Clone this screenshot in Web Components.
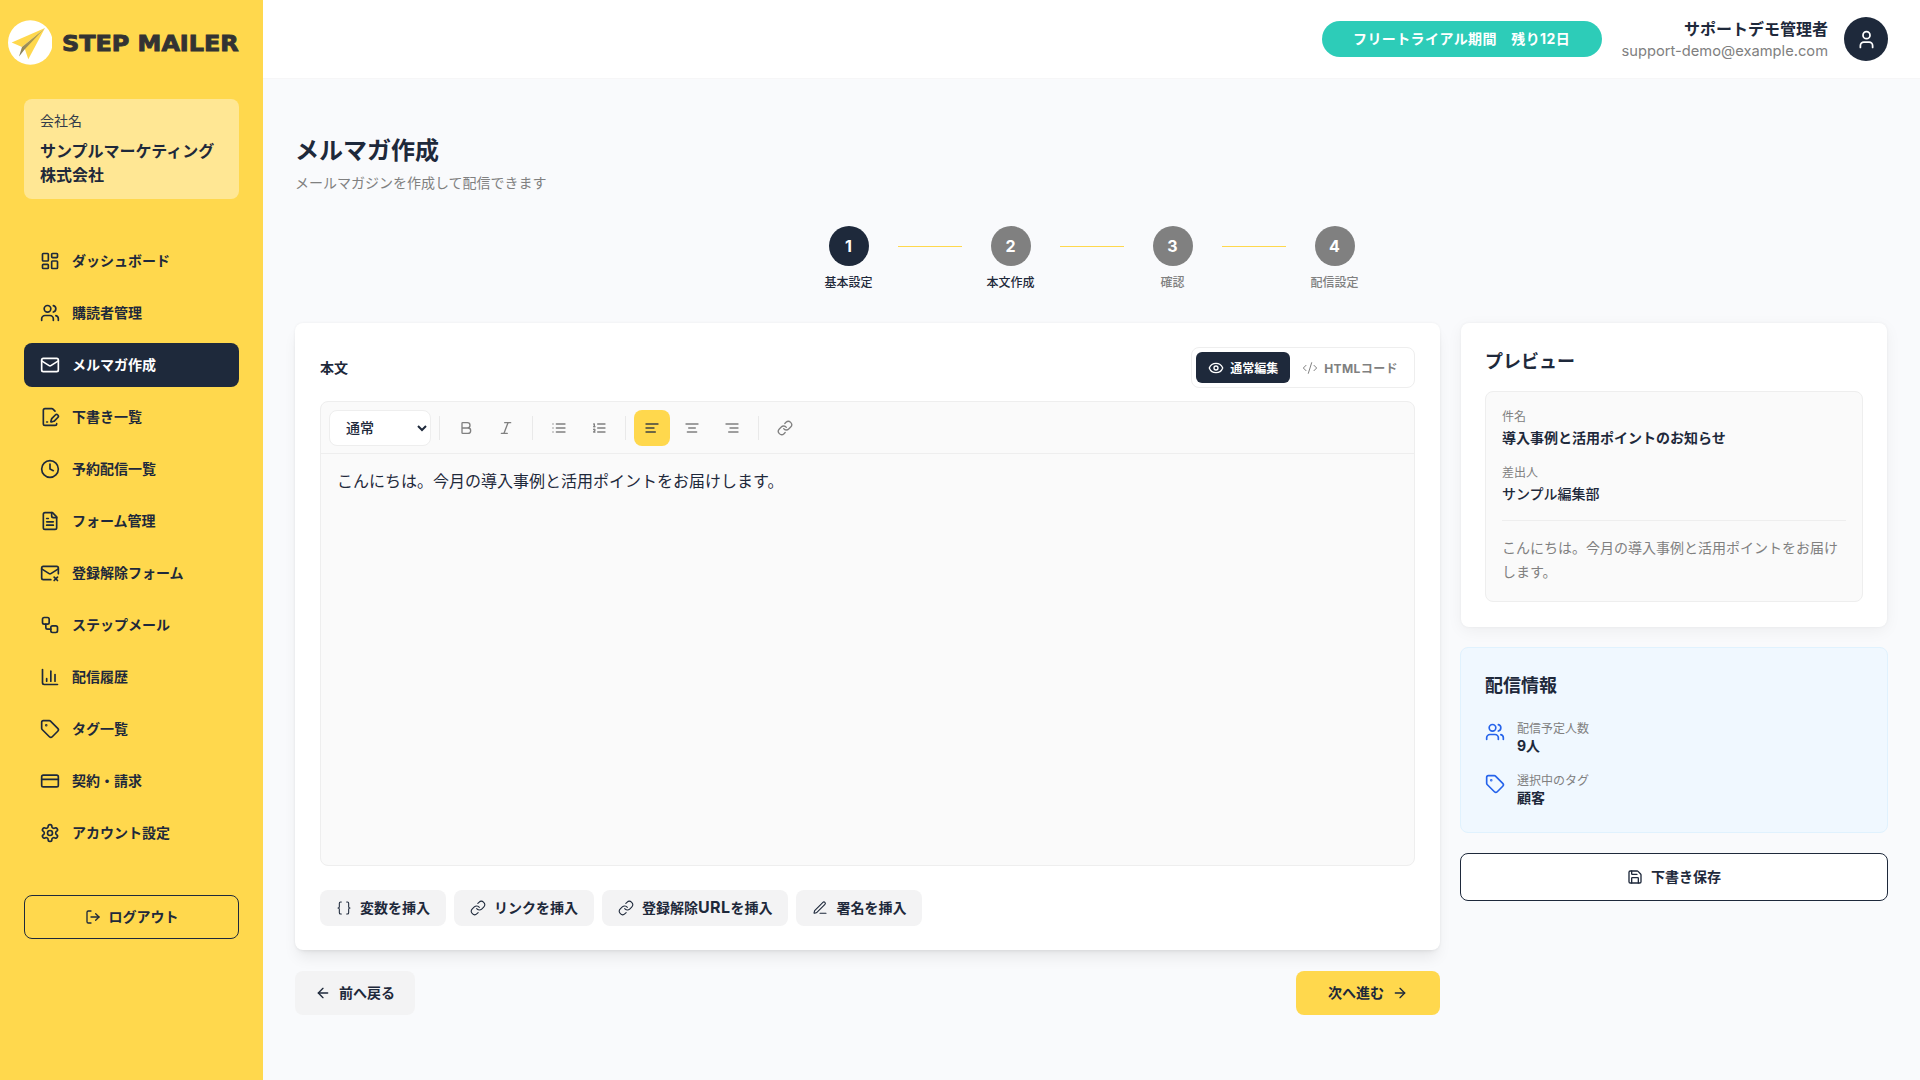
<!DOCTYPE html>
<html lang="ja">
<head>
<meta charset="utf-8">
<title>メルマガ作成</title>
<style>
  html, body { margin: 0; height: 100%; }
  body {
    font-family: Inter, "Noto Sans CJK JP", sans-serif;
    color: #1e293b;
    background: #f9fafc;
    overflow: hidden;
  }
  app-shell { height: 1080px; }
</style>
</head>
<body>
<app-shell>
  <side-bar slot="side">
    <nav-item icon="dashboard">ダッシュボード</nav-item>
    <nav-item icon="users">購読者管理</nav-item>
    <nav-item icon="mail" active>メルマガ作成</nav-item>
    <nav-item icon="filepen">下書き一覧</nav-item>
    <nav-item icon="clock">予約配信一覧</nav-item>
    <nav-item icon="filetext">フォーム管理</nav-item>
    <nav-item icon="mailx">登録解除フォーム</nav-item>
    <nav-item icon="workflow">ステップメール</nav-item>
    <nav-item icon="chart">配信履歴</nav-item>
    <nav-item icon="tag">タグ一覧</nav-item>
    <nav-item icon="card">契約・請求</nav-item>
    <nav-item icon="settings">アカウント設定</nav-item>
  </side-bar>
  <top-bar slot="top"></top-bar>
  <page-head title="メルマガ作成" sub="メールマガジンを作成して配信できます"></page-head>
  <step-row></step-row>
  <two-col>
    <div slot="left">
      <editor-card></editor-card>
      <wizard-nav></wizard-nav>
    </div>
    <div slot="right">
      <preview-card></preview-card>
      <info-card></info-card>
      <action-btn variant="outline" icon="save" wide>下書き保存</action-btn>
    </div>
  </two-col>
</app-shell>

<script>
const ICONS = {
  dashboard: '<rect x="3" y="3" width="7" height="9" rx="1"/><rect x="14" y="3" width="7" height="5" rx="1"/><rect x="14" y="12" width="7" height="9" rx="1"/><rect x="3" y="16" width="7" height="5" rx="1"/>',
  users: '<path d="M16 21v-2a4 4 0 0 0-4-4H6a4 4 0 0 0-4 4v2"/><circle cx="9" cy="7" r="4"/><path d="M22 21v-2a4 4 0 0 0-3-3.87"/><path d="M16 3.13a4 4 0 0 1 0 7.75"/>',
  mail: '<rect x="2" y="4" width="20" height="16" rx="2"/><path d="m22 7-8.97 5.7a1.94 1.94 0 0 1-2.06 0L2 7"/>',
  filepen: '<path d="m18 5-2.414-2.414A2 2 0 0 0 14.172 2H6a2 2 0 0 0-2 2v16a2 2 0 0 0 2 2h12a2 2 0 0 0 2-2"/><path d="M21.378 12.626a1 1 0 0 0-3.004-3.004l-4.01 4.012a2 2 0 0 0-.506.854l-.837 2.87a.5.5 0 0 0 .62.62l2.87-.837a2 2 0 0 0 .854-.506z"/><path d="M8 18h1"/>',
  clock: '<circle cx="12" cy="12" r="10"/><polyline points="12 6 12 12 16 14"/>',
  filetext: '<path d="M15 2H6a2 2 0 0 0-2 2v16a2 2 0 0 0 2 2h12a2 2 0 0 0 2-2V7Z"/><path d="M14 2v4a2 2 0 0 0 2 2h4"/><path d="M10 9H8"/><path d="M16 13H8"/><path d="M16 17H8"/>',
  mailx: '<path d="M22 13V6a2 2 0 0 0-2-2H4a2 2 0 0 0-2 2v12c0 1.1.9 2 2 2h9"/><path d="m22 7-8.97 5.7a1.94 1.94 0 0 1-2.06 0L2 7"/><path d="m17 17 4 4"/><path d="m21 17-4 4"/>',
  workflow: '<rect x="3" y="3" width="8" height="8" rx="2"/><path d="M7 11v4a2 2 0 0 0 2 2h4"/><rect x="13" y="13" width="8" height="8" rx="2"/>',
  chart: '<path d="M3 3v16a2 2 0 0 0 2 2h16"/><path d="M18 17V9"/><path d="M13 17V5"/><path d="M8 17v-3"/>',
  tag: '<path d="M12.586 2.586A2 2 0 0 0 11.172 2H4a2 2 0 0 0-2 2v7.172a2 2 0 0 0 .586 1.414l8.704 8.704a2.426 2.426 0 0 0 3.42 0l6.58-6.58a2.426 2.426 0 0 0 0-3.42z"/><circle cx="7.5" cy="7.5" r=".5" fill="currentColor"/>',
  card: '<rect x="2" y="5" width="20" height="14" rx="2"/><line x1="2" y1="10" x2="22" y2="10"/>',
  settings: '<path d="M12.22 2h-.44a2 2 0 0 0-2 2v.18a2 2 0 0 1-1 1.73l-.43.25a2 2 0 0 1-2 0l-.15-.08a2 2 0 0 0-2.73.73l-.22.38a2 2 0 0 0 .73 2.73l.15.1a2 2 0 0 1 1 1.72v.51a2 2 0 0 1-1 1.74l-.15.09a2 2 0 0 0-.73 2.73l.22.38a2 2 0 0 0 2.73.73l.15-.08a2 2 0 0 1 2 0l.43.25a2 2 0 0 1 1 1.73V20a2 2 0 0 0 2 2h.44a2 2 0 0 0 2-2v-.18a2 2 0 0 1 1-1.73l.43-.25a2 2 0 0 1 2 0l.15.08a2 2 0 0 0 2.73-.73l.22-.39a2 2 0 0 0-.73-2.73l-.15-.08a2 2 0 0 1-1-1.74v-.5a2 2 0 0 1 1-1.74l.15-.09a2 2 0 0 0 .73-2.73l-.22-.38a2 2 0 0 0-2.73-.73l-.15.08a2 2 0 0 1-2 0l-.43-.25a2 2 0 0 1-1-1.73V4a2 2 0 0 0-2-2z"/><circle cx="12" cy="12" r="3"/>',
  logout: '<path d="M9 21H5a2 2 0 0 1-2-2V5a2 2 0 0 1 2-2h4"/><path d="m16 17 5-5-5-5"/><path d="M21 12H9"/>',
  user: '<path d="M19 21v-2a4 4 0 0 0-4-4H9a4 4 0 0 0-4 4v2"/><circle cx="12" cy="7" r="4"/>',
  eye: '<path d="M2.06 12.35a1 1 0 0 1 0-.7 10.75 10.75 0 0 1 19.88 0 1 1 0 0 1 0 .7 10.75 10.75 0 0 1-19.88 0"/><circle cx="12" cy="12" r="3"/>',
  code: '<path d="m18 16 4-4-4-4"/><path d="m6 8-4 4 4 4"/><path d="m14.5 4-5 16"/>',
  bold: '<path d="M6 12h9a4 4 0 0 1 0 8H7a1 1 0 0 1-1-1V5a1 1 0 0 1 1-1h7a4 4 0 0 1 0 8"/>',
  italic: '<line x1="19" y1="4" x2="10" y2="4"/><line x1="14" y1="20" x2="5" y2="20"/><line x1="15" y1="4" x2="9" y2="20"/>',
  list: '<path d="M3 12h.01"/><path d="M3 18h.01"/><path d="M3 6h.01"/><path d="M8 12h13"/><path d="M8 18h13"/><path d="M8 6h13"/>',
  olist: '<path d="M10 12h11"/><path d="M10 18h11"/><path d="M10 6h11"/><path d="M4 10h2"/><path d="M4 6h1v4"/><path d="M6 18H4c0-1 2-2 2-3s-1-1.5-2-1"/>',
  alignl: '<path d="M21 6H3"/><path d="M15 12H3"/><path d="M17 18H3"/>',
  alignc: '<path d="M21 6H3"/><path d="M17 12H7"/><path d="M19 18H5"/>',
  alignr: '<path d="M21 6H3"/><path d="M21 12H9"/><path d="M21 18H7"/>',
  link: '<path d="M10 13a5 5 0 0 0 7.54.54l3-3a5 5 0 0 0-7.07-7.07l-1.72 1.71"/><path d="M14 11a5 5 0 0 0-7.54-.54l-3 3a5 5 0 0 0 7.07 7.07l1.71-1.71"/>',
  braces: '<path d="M8 3H7a2 2 0 0 0-2 2v5a2 2 0 0 1-2 2 2 2 0 0 1 2 2v5c0 1.1.9 2 2 2h1"/><path d="M16 21h1a2 2 0 0 0 2-2v-5c0-1.1.9-2 2-2a2 2 0 0 1-2-2V5a2 2 0 0 0-2-2h-1"/>',
  pen: '<path d="M12 20h9"/><path d="M16.376 3.622a1 1 0 0 1 3.002 3.002L7.368 18.635a2 2 0 0 1-.855.506l-2.872.838a.5.5 0 0 1-.62-.62l.838-2.872a2 2 0 0 1 .506-.854z"/>',
  left: '<path d="m12 19-7-7 7-7"/><path d="M19 12H5"/>',
  right: '<path d="M5 12h14"/><path d="m12 5 7 7-7 7"/>',
  save: '<path d="M15.2 3a2 2 0 0 1 1.4.6l3.8 3.8a2 2 0 0 1 .6 1.4V19a2 2 0 0 1-2 2H5a2 2 0 0 1-2-2V5a2 2 0 0 1 2-2z"/><path d="M17 21v-7a1 1 0 0 0-1-1H8a1 1 0 0 0-1 1v7"/><path d="M7 3v4a1 1 0 0 0 1 1h7"/>'
};

class XIcon extends HTMLElement {
  connectedCallback() {
    const size = this.getAttribute('size') || 16;
    const sw = this.getAttribute('sw') || 2;
    this.attachShadow({ mode: 'open' });
    this.shadowRoot.innerHTML = `
      <style>:host { display: inline-flex; flex: none; } svg { display: block; }</style>
      <svg width="${size}" height="${size}" viewBox="0 0 24 24" fill="none" stroke="currentColor"
        stroke-width="${sw}" stroke-linecap="round" stroke-linejoin="round">${ICONS[this.getAttribute('name')] || ''}</svg>`;
  }
}
customElements.define('x-icon', XIcon);

class AppShell extends HTMLElement {
  connectedCallback() {
    this.attachShadow({ mode: 'open' });
    this.shadowRoot.innerHTML = `
      <style>
        :host { display: flex; width: 100%; }
        .body { flex: 1; min-width: 0; display: flex; flex-direction: column; }
        main { padding: 54px 32px 0; display: flex; flex-direction: column; }
      </style>
      <slot name="side"></slot>
      <div class="body">
        <slot name="top"></slot>
        <main><slot></slot></main>
      </div>`;
  }
}
customElements.define('app-shell', AppShell);

class SideBar extends HTMLElement {
  connectedCallback() {
    this.attachShadow({ mode: 'open' });
    this.shadowRoot.innerHTML = `
      <style>
        :host { display: flex; flex-direction: column; flex: none; width: 263px; height: 1080px; background: #ffd84d; padding: 0 24px; box-sizing: border-box; color: #1e293b; }
        .logo { display: flex; align-items: center; gap: 10px; height: 85px; margin: 0 -16px; }
        .logo svg { flex: none; }
        .word { font-family: "DejaVu Sans", sans-serif; font-weight: 700; font-size: 24px; line-height: 1; color: #333; -webkit-text-stroke: 1px #333; white-space: nowrap; transform: translateY(1px) scale(.995, .92); transform-origin: left center; }
        .company { margin-top: 14px; height: 100px; box-sizing: border-box; background: rgba(255,255,255,.4); border-radius: 8px; padding: 12px 16px; }
        .label { font-size: 14px; line-height: 20px; color: #333c4a; }
        .name { font-size: 16px; line-height: 24px; font-weight: 700; margin-top: 8px; }
        nav { margin-top: 40px; display: flex; flex-direction: column; gap: 8px; }
        .out { margin-top: 40px; }
      </style>
      <div class="logo">
        <svg width="44" height="45" viewBox="0 0 44 45">
          <defs><linearGradient id="fold" x1="0" y1="0" x2="0" y2="1"><stop offset="0" stop-color="#c9ab3e"/><stop offset="1" stop-color="#7f7b66"/></linearGradient></defs>
          <circle cx="22.3" cy="22.5" r="22.3" fill="#fff"/>
          <polygon points="37,8 3.7,22.6 14,27" fill="#ffd84d"/>
          <polygon points="37,8 16.5,28 20.3,39.3" fill="#ffd84d"/>
          <polygon points="37,8 14,27 11,36.5 17,29" fill="url(#fold)"/>
        </svg>
        <span class="word">STEP MAILER</span>
      </div>
      <div class="company">
        <div class="label">会社名</div>
        <div class="name">サンプルマーケティング<br>株式会社</div>
      </div>
      <nav><slot></slot></nav>
      <div class="out"><action-btn variant="outline" icon="logout" wide h="44">ログアウト</action-btn></div>`;
  }
}
customElements.define('side-bar', SideBar);

class NavItem extends HTMLElement {
  connectedCallback() {
    this.attachShadow({ mode: 'open' });
    this.shadowRoot.innerHTML = `
      <style>
        :host { display: flex; align-items: center; gap: 12px; height: 44px; padding: 0 16px; border-radius: 8px; font-size: 14px; font-weight: 700; color: #1e293b; }
        :host([active]) { background: #1e293b; color: #fff; }
        .t { margin-top: -2px; }
      </style>
      <x-icon name="${this.getAttribute('icon')}" size="20"></x-icon><span class="t"><slot></slot></span>`;
  }
}
customElements.define('nav-item', NavItem);

class TopBar extends HTMLElement {
  connectedCallback() {
    this.attachShadow({ mode: 'open' });
    this.shadowRoot.innerHTML = `
      <style>
        :host { display: flex; justify-content: flex-end; align-items: center; height: 78px; padding: 0 32px; background: #fff; border-bottom: 1px solid #f6f6f7; }
        .trial { width: 280px; height: 36px; box-sizing: border-box; padding-bottom: 2px; border-radius: 18px; background: #2dccb8; color: #fff; font-size: 14px; font-weight: 700; letter-spacing: .4px; display: flex; align-items: center; justify-content: center; white-space: pre; }
        .who { text-align: right; margin: 0 16px 0 20px; }
        .n { font-size: 16px; line-height: 24px; font-weight: 700; }
        .m { font-size: 14.7px; line-height: 20px; color: #808080; }
        .av { width: 44px; height: 44px; border-radius: 50%; background: #1e293b; color: #fff; display: flex; align-items: center; justify-content: center; }
      </style>
      <div class="trial">フリートライアル期間　残り12日</div>
      <div class="who"><div class="n">サポートデモ管理者</div><div class="m">support-demo@example.com</div></div>
      <div class="av"><x-icon name="user" size="21"></x-icon></div>`;
  }
}
customElements.define('top-bar', TopBar);

class PageHead extends HTMLElement {
  connectedCallback() {
    this.attachShadow({ mode: 'open' });
    this.shadowRoot.innerHTML = `
      <style>
        :host { display: block; }
        h1 { margin: 0; font-size: 24px; line-height: 36px; font-weight: 700; }
        p { margin: 4px 0 0; font-size: 14px; line-height: 20px; color: #808080; }
      </style>
      <h1>${this.getAttribute('title')}</h1>
      <p>${this.getAttribute('sub')}</p>`;
  }
}
customElements.define('page-head', PageHead);

class StepRow extends HTMLElement {
  connectedCallback() {
    this.attachShadow({ mode: 'open' });
    const steps = [['基本設定', 1, 1], ['本文作成', 0, 1], ['確認', 0, 0], ['配信設定', 0, 0]];
    this.shadowRoot.innerHTML = `
      <style>
        :host { display: flex; justify-content: center; margin-top: 33px; }
        .s { width: 48px; display: flex; flex-direction: column; align-items: center; gap: 8px; }
        .c { width: 40px; height: 40px; border-radius: 50%; background: #808080; color: #fff; font-size: 16px; font-weight: 700; display: flex; align-items: center; justify-content: center; }
        .c.on { background: #1e293b; }
        .l { font-size: 12px; line-height: 18px; font-weight: 500; color: #808080; white-space: nowrap; }
        .l.dark { color: #1e293b; }
        .line { width: 64px; height: 1px; background: #ffd84d; margin: 20px 25px 0; }
      </style>
      ${steps.map((s, i) => `
        ${i ? '<div class="line"></div>' : ''}
        <div class="s"><div class="c ${s[1] ? 'on' : ''}">${i + 1}</div><div class="l ${s[2] ? 'dark' : ''}">${s[0]}</div></div>`).join('')}`;
  }
}
customElements.define('step-row', StepRow);

class TwoCol extends HTMLElement {
  connectedCallback() {
    this.attachShadow({ mode: 'open' });
    this.shadowRoot.innerHTML = `
      <style>
        :host { display: grid; grid-template-columns: 1145px 428px; gap: 20px; margin-top: 31px; }
        ::slotted([slot=right]) { display: flex; flex-direction: column; gap: 20px; }
      </style>
      <slot name="left"></slot><slot name="right"></slot>`;
  }
}
customElements.define('two-col', TwoCol);

class ToolBtn extends HTMLElement {
  connectedCallback() {
    this.attachShadow({ mode: 'open' });
    this.shadowRoot.innerHTML = `
      <style>
        :host { display: flex; align-items: center; justify-content: center; width: 36px; height: 36px; border-radius: 8px; color: #808080; }
        :host([active]) { background: #ffd84d; color: #3f4142; }
      </style>
      <x-icon name="${this.getAttribute('icon')}" size="16"></x-icon>`;
  }
}
customElements.define('tool-btn', ToolBtn);

class ActionBtn extends HTMLElement {
  connectedCallback() {
    this.attachShadow({ mode: 'open' });
    const h = this.getAttribute('h');
    const icon = this.getAttribute('icon');
    const after = this.getAttribute('after');
    this.shadowRoot.innerHTML = `
      <style>
        :host { display: inline-flex; align-items: center; justify-content: center; gap: 8px; height: ${h || 36}px; box-sizing: border-box; padding: 0 16px; border-radius: 8px; font-size: 14px; font-weight: 700; white-space: nowrap; background: #f3f3f4; color: #1e293b; }
        :host([wide]) { display: flex; }
        :host([variant=outline]) { background: transparent; border: 1px solid #1e293b; }
        :host([variant=primary]) { background: #ffd84d; }
        .t { margin-top: -2px; }
        .t ::slotted(span) { font-size: 16px; letter-spacing: .4px; }
      </style>
      ${icon ? `<x-icon name="${icon}" size="16" sw="${this.getAttribute('sw') || 2}"></x-icon>` : ''}<span class="t"><slot></slot></span>${after ? `<x-icon name="${after}" size="16"></x-icon>` : ''}`;
    if (this.hasAttribute('wide') && !h) this.style.height = '48px';
    if (this.getAttribute('variant') === 'outline' && this.closest('[slot=right]')) this.style.background = '#fff';
  }
}
customElements.define('action-btn', ActionBtn);

class EditorCard extends HTMLElement {
  connectedCallback() {
    this.attachShadow({ mode: 'open' });
    this.shadowRoot.innerHTML = `
      <style>
        :host { display: block; background: #fff; border-radius: 8px; padding: 24px 25px 24px 25px; box-shadow: 0 10px 15px -3px rgba(0,0,0,.08), 0 4px 6px -4px rgba(0,0,0,.08), 0 0 3px rgba(0,0,0,.06); }
        .head { display: flex; justify-content: space-between; align-items: center; height: 41px; }
        .lab { font-size: 14px; font-weight: 700; padding-bottom: 2px; }
        .tabs { display: flex; padding: 4px; border: 1px solid #eeeeee; border-radius: 8px; height: 41px; box-sizing: border-box; }
        .tab { display: flex; align-items: center; gap: 6px; height: 31px; padding: 0 12px; border-radius: 6px; font-size: 12px; font-weight: 700; color: #808080; white-space: nowrap; }
        .tab.on { background: #1e293b; color: #fff; }
        .tab b { font-weight: 700; letter-spacing: .4px; }
        .ed { margin-top: 13px; height: 465px; box-sizing: border-box; border: 1px solid #eeeeee; border-radius: 8px; background: #fafafa; display: flex; flex-direction: column; }
        .bar { height: 52px; flex: none; box-sizing: border-box; border-bottom: 1px solid #eeeeee; padding: 0 8px; display: flex; align-items: center; gap: 4px; }
        select { width: 102px; height: 36px; border: 1px solid #eeeeee; border-radius: 8px; background: #fff; font: 500 14px Inter, "Noto Sans CJK JP", sans-serif; color: #1e293b; padding: 0 12px; }
        .sep { width: 1px; height: 24px; background: #e9e9e9; margin: 0 4px; }
        .txt { padding: 15px 16px; font-size: 16px; line-height: 24px; color: #1e293b; }
        .ins { margin-top: 24px; display: flex; gap: 8px; }
      </style>
      <div class="head">
        <div class="lab">本文</div>
        <div class="tabs">
          <div class="tab on"><x-icon name="eye" size="16"></x-icon>通常編集</div>
          <div class="tab"><x-icon name="code" size="16" sw="1.5"></x-icon><b>HTMLコード</b></div>
        </div>
      </div>
      <div class="ed">
        <div class="bar">
          <select><option>通常</option></select>
          <div class="sep"></div>
          <tool-btn icon="bold"></tool-btn><tool-btn icon="italic"></tool-btn>
          <div class="sep"></div>
          <tool-btn icon="list"></tool-btn><tool-btn icon="olist"></tool-btn>
          <div class="sep"></div>
          <tool-btn icon="alignl" active></tool-btn><tool-btn icon="alignc"></tool-btn><tool-btn icon="alignr"></tool-btn>
          <div class="sep"></div>
          <tool-btn icon="link"></tool-btn>
        </div>
        <div class="txt">こんにちは。今月の導入事例と活用ポイントをお届けします。</div>
      </div>
      <div class="ins">
        <action-btn icon="braces" sw="1.6">変数を挿入</action-btn>
        <action-btn icon="link" sw="1.6">リンクを挿入</action-btn>
        <action-btn icon="link" sw="1.6">登録解除<span>URL</span>を挿入</action-btn>
        <action-btn icon="pen" sw="1.6">署名を挿入</action-btn>
      </div>`;
  }
}
customElements.define('editor-card', EditorCard);

class WizardNav extends HTMLElement {
  connectedCallback() {
    this.attachShadow({ mode: 'open' });
    this.shadowRoot.innerHTML = `
      <style>
        :host { display: flex; justify-content: space-between; margin-top: 21px; }
      </style>
      <action-btn h="44" icon="left" style="padding:0 20px">前へ戻る</action-btn>
      <action-btn h="44" variant="primary" after="right" style="padding:0 32px">次へ進む</action-btn>`;
  }
}
customElements.define('wizard-nav', WizardNav);

class PreviewCard extends HTMLElement {
  connectedCallback() {
    this.attachShadow({ mode: 'open' });
    this.shadowRoot.innerHTML = `
      <style>
        :host { display: block; height: 304px; box-sizing: border-box; background: #fff; border-radius: 8px; margin: 0 1px; padding: 25px 24px 24px; box-shadow: 0 4px 16px rgba(0,0,0,.05), 0 0 3px rgba(0,0,0,.05); }
        h2 { margin: 0; font-size: 18px; line-height: 28px; font-weight: 700; }
        .box { margin-top: 15px; height: 211px; box-sizing: border-box; border: 1px solid #eeeeee; border-radius: 8px; background: #fafafa; padding: 16px; }
        .k { font-size: 12px; line-height: 18px; color: #808080; }
        .v { font-size: 14px; line-height: 22px; margin-top: 1px; }
        .v.b { font-weight: 700; }
        .v.m { font-weight: 500; }
        .k2 { margin-top: 15px; }
        hr { border: 0; border-top: 1px solid #eeeeee; margin: 15px 0 15px; }
        .p { font-size: 14px; line-height: 24px; color: #808080; }
      </style>
      <h2>プレビュー</h2>
      <div class="box">
        <div class="k">件名</div>
        <div class="v b">導入事例と活用ポイントのお知らせ</div>
        <div class="k k2">差出人</div>
        <div class="v m">サンプル編集部</div>
        <hr>
        <div class="p">こんにちは。今月の導入事例と活用ポイントをお届けします。</div>
      </div>`;
  }
}
customElements.define('preview-card', PreviewCard);

class InfoCard extends HTMLElement {
  connectedCallback() {
    this.attachShadow({ mode: 'open' });
    this.shadowRoot.innerHTML = `
      <style>
        :host { display: block; height: 186px; box-sizing: border-box; background: #f0f8ff; border: 1px solid #e0f2fe; border-radius: 8px; padding: 24px; }
        h2 { margin: 0 0 20px; font-size: 18px; line-height: 28px; font-weight: 700; }
        .r { display: flex; gap: 12px; height: 40px; margin-bottom: 12px; }
        x-icon { color: #2563eb; margin-top: 2px; }
        .k { font-size: 12px; line-height: 18px; color: #808080; }
        .v { font-size: 14px; line-height: 20px; font-weight: 700; margin-top: -2px; }
      </style>
      <h2>配信情報</h2>
      <div class="r"><x-icon name="users" size="20"></x-icon><div><div class="k">配信予定人数</div><div class="v">9人</div></div></div>
      <div class="r"><x-icon name="tag" size="20"></x-icon><div><div class="k">選択中のタグ</div><div class="v">顧客</div></div></div>`;
  }
}
customElements.define('info-card', InfoCard);
</script>
</body>
</html>
